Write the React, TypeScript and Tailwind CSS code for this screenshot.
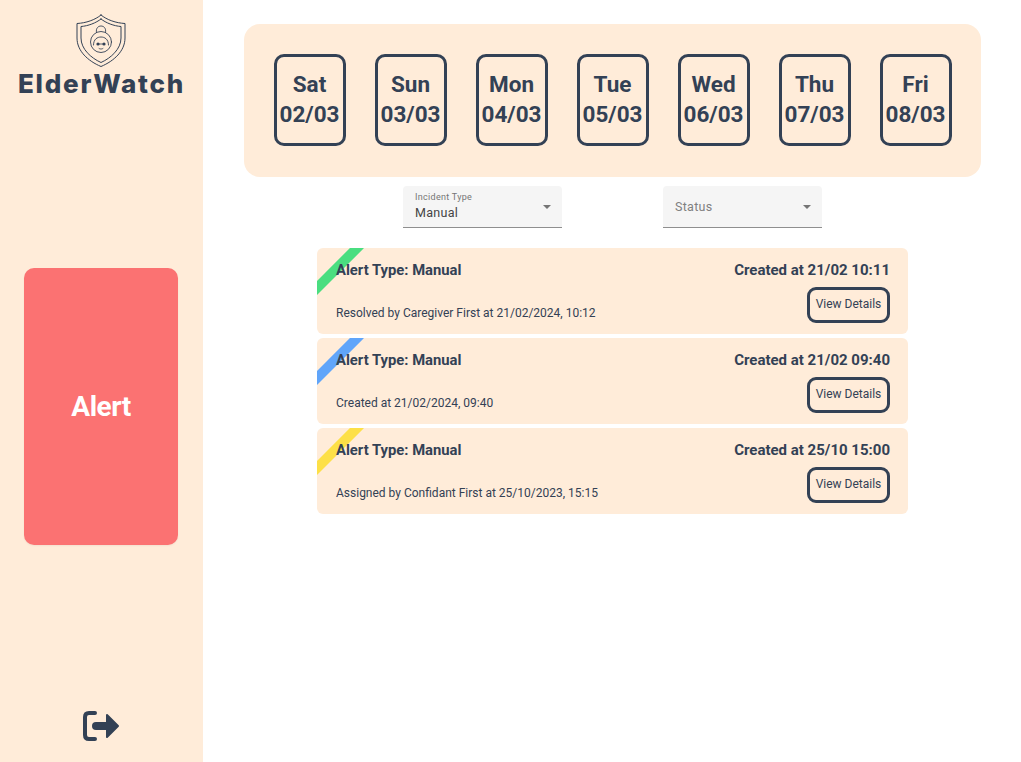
const DAYS = [
  { day: 'Sat', date: '02/03' },
  { day: 'Sun', date: '03/03' },
  { day: 'Mon', date: '04/03' },
  { day: 'Tue', date: '05/03' },
  { day: 'Wed', date: '06/03' },
  { day: 'Thu', date: '07/03' },
  { day: 'Fri', date: '08/03' },
];

const ALERTS = [
  { ribbon: 'bg-[#4ade80]', created: 'Created at 21/02 10:11', detail: 'Resolved by Caregiver First at 21/02/2024, 10:12' },
  { ribbon: 'bg-[#60a5fa]', created: 'Created at 21/02 09:40', detail: 'Created at 21/02/2024, 09:40' },
  { ribbon: 'bg-[#fde047]', created: 'Created at 25/10 15:00', detail: 'Assigned by Confidant First at 25/10/2023, 15:15' },
];

function ShieldLogo() {
  return (
    <svg width="50" height="54" viewBox="0 0 50 54" fill="none" stroke="#334155" strokeLinejoin="round" strokeLinecap="round">
      {/* outer and inner shield */}
      <path d="M25 1 C19 6 10 9 1 9.5 V24 C1 37 12 47 25 52.5 C38 47 49 37 49 24 V9.5 C40 9 31 6 25 1 Z" strokeWidth="1" />
      <path d="M25 5 C20 9 12 12 5 12.5 V24 C5 35 15 44 25 48.5 C35 44 45 35 45 24 V12.5 C38 12 30 9 25 5 Z" strokeWidth="1" />
      {/* head, bun and hairline */}
      <circle cx="25" cy="28" r="10.5" strokeWidth="0.9" />
      <path d="M20.5 18.5 C19.5 14 22.5 12 25 12 C27.5 12 30.5 14 29.5 18.5" strokeWidth="0.9" />
      <path d="M17.5 31 C17.5 25 21.5 23 25 23 C28.5 23 32.5 25 32.5 31" strokeWidth="0.9" />
      {/* glasses and mouth */}
      <circle cx="22" cy="30" r="1.6" fill="#334155" stroke="none" />
      <circle cx="28" cy="30" r="1.6" fill="#334155" stroke="none" />
      <path d="M23 30 H27 M23 34.5 C24 35.3 26 35.3 27 34.5" strokeWidth="0.8" />
    </svg>
  );
}

function LogoutIcon() {
  return (
    <svg width="38" height="32" viewBox="0 0 38 32" fill="none" stroke="#334155" strokeLinecap="round" strokeLinejoin="round">
      <path d="M13 3 H7 Q3 3 3 7 V25 Q3 29 7 29 H13" strokeWidth="4" />
      <path d="M14 16 H25" strokeWidth="8" />
      <path d="M25 5 L36 16 L25 27 Z" fill="#334155" strokeWidth="2" />
    </svg>
  );
}

function Dropdown({ label, value }: { label: string; value?: string }) {
  return (
    <div className="relative h-[42px] w-[159px] rounded-t bg-[#f5f5f5] border-b border-[#8f8f8f] px-3">
      {value ? (
        <div className="pt-[6px]">
          <div className="text-[9px] leading-[10px] tracking-[0.3px] text-[#757575]">{label}</div>
          <div className="mt-[3px] text-[12.5px] leading-[15px] tracking-[0.3px] text-[#444444]">{value}</div>
        </div>
      ) : (
        <div className="pt-[13px] text-[12.5px] leading-[15px] tracking-[0.3px] text-[#808080]">{label}</div>
      )}
      <div className="absolute right-[11px] top-[19px] h-0 w-0 border-x-[4px] border-t-[4px] border-x-transparent border-t-[#757575]" />
    </div>
  );
}

function AlertCard({ ribbon, created, detail }: { ribbon: string; created: string; detail: string }) {
  return (
    <div className="relative h-[86px] overflow-hidden rounded-md bg-[#ffecd9] pl-[19px] pr-[18px] text-[#334155]">
      <div className={`absolute left-[-25px] top-[20px] h-[10px] w-[80px] -rotate-45 ${ribbon}`} />
      <div className="relative flex h-full justify-between">
        <div className="flex flex-col">
          <div className="mt-[13px] text-[14.8px] leading-[18px] font-bold">Alert Type: Manual</div>
          <div className="mt-[26px] text-[12px] leading-[16px]">{detail}</div>
        </div>
        <div className="flex flex-col items-end">
          <div className="mt-[13px] text-[15px] leading-[18px] font-bold">{created}</div>
          <button className="mt-[8px] flex h-[36px] w-[83px] items-center justify-center rounded-[9px] border-[3px] border-[#334155] pb-[2px] text-[12px]">
            View Details
          </button>
        </div>
      </div>
    </div>
  );
}

export default function App() {
  return (
    <div className="flex h-[762px] w-[1021px] overflow-hidden bg-white font-['Roboto',sans-serif]">
      {/* Sidebar */}
      <aside className="flex w-[203px] flex-col bg-[#ffecd9]">
        <div className="mt-[14px] ml-[76px]">
          <ShieldLogo />
        </div>
        <div className="text-center font-['Inter',sans-serif] text-[26px] leading-[32px] font-extrabold tracking-[1.8px] text-[#334155]">
          ElderWatch
        </div>
        <button className="mt-[168px] ml-[24px] flex h-[277px] w-[154px] items-center justify-center rounded-[10px] bg-[#fb7272] text-[28px] font-bold tracking-[-0.5px] text-white shadow-xs">
          Alert
        </button>
        <div className="mt-[165px] ml-[82px]">
          <LogoutIcon />
        </div>
      </aside>

      {/* Main */}
      <main className="flex-1">
        <section className="mt-[24px] ml-[41px] mr-[40px] flex h-[153px] items-center justify-center gap-[29px] rounded-2xl bg-[#ffecd9] pb-[2px]">
          {DAYS.map((d) => (
            <div
              key={d.day}
              className="flex h-[92px] w-[72px] flex-col items-center justify-center rounded-[10px] border-[3px] border-[#334155] pb-[2px] text-[22.5px] leading-[30px] font-bold text-[#334155]"
            >
              <div>{d.day}</div>
              <div>{d.date}</div>
            </div>
          ))}
        </section>

        <div className="mt-[9px] flex justify-center gap-[101px] pl-[1px]">
          <Dropdown label="Incident Type" value="Manual" />
          <Dropdown label="Status" />
        </div>

        <div className="mt-[20px] ml-[114px] flex w-[591px] flex-col gap-[4px]">
          {ALERTS.map((a) => (
            <AlertCard key={a.created} {...a} />
          ))}
        </div>
      </main>
    </div>
  );
}
